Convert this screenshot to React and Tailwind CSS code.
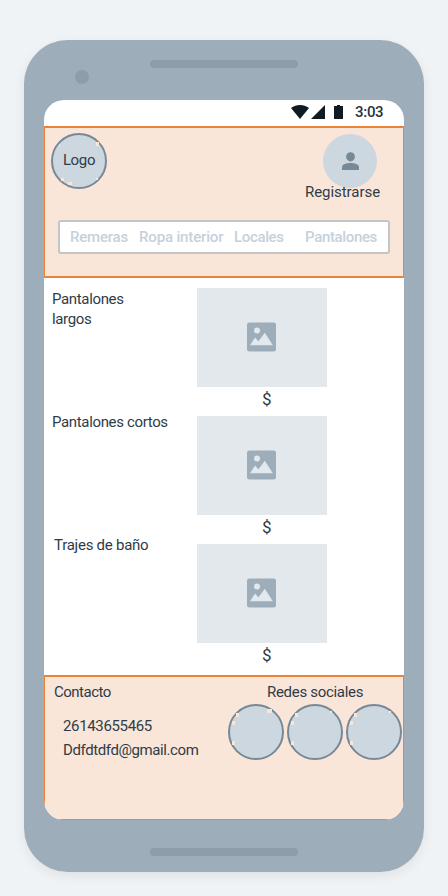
import React from "react";

function Disc({ specks, children }) {
  return (
    <div className="relative flex h-14 w-14 shrink-0 items-center justify-center rounded-full border-2 border-[#778996] bg-[#cdd7e0]">
      <svg className="absolute -left-0.5 -top-0.5" width="56" height="56" fill="#f9e6d9">
        {specks.map(([x, y, w, h]) => (
          <rect key={`${x}-${y}`} x={x} y={y} width={w} height={h} />
        ))}
      </svg>
      {children}
    </div>
  );
}

const logoSpecks = [[45, 9, 3, 4], [8, 11, 1, 2], [10, 45, 3, 3], [17, 49, 4, 3], [45, 45, 2, 2]];
const socialSpecks = [[8, 9, 3, 4], [4, 17, 3, 4], [4, 37, 3, 4]];

function Picture() {
  return (
    <div className="flex h-32 flex-col">
      <div className="flex h-[98.5px] w-[130px] items-center justify-center bg-[#e2e8ec]">
        <svg width="30" height="30" viewBox="0 0 30 30" className="-translate-x-[0.5px]">
          <rect x="0.5" y="0.5" width="29" height="29" rx="2.5" fill="#9dadb9" />
          <circle cx="10.5" cy="8.5" r="3" fill="#e2e8ec" />
          <path d="M3.5 23.2 8.5 15.5 12 19.3 18.3 10.8 26.4 23.2Z" fill="#e2e8ec" />
        </svg>
      </div>
      <span className="ml-[65px] mt-0.5 text-[17px] leading-5">$</span>
    </div>
  );
}

export default function App() {
  return (
    <div className="flex h-[896px] w-[448px] flex-col overflow-hidden whitespace-nowrap bg-[#eff3f6] px-6 pt-10 font-['Roboto',sans-serif] text-[15px] leading-5 tracking-[-0.35px] text-[#2f3c48]">
      <div className="flex h-[832px] w-[400px] flex-col items-center rounded-[44px] bg-[#9dadb9] shadow-[0_4px_12px_rgba(0,0,0,0.07)]">
        <div className="flex h-[60px] w-full shrink-0 pl-[51px]">
          <div className="mt-[30px] h-3.5 w-3.5 rounded-full bg-[#8e9dac]" />
          <div className="ml-[61px] mt-5 h-2 w-[148px] rounded-full bg-[#8e9dac]" />
        </div>

        <div className="flex h-[720px] w-[360px] shrink-0 flex-col overflow-hidden rounded-[20px] bg-white">
          <div className="flex h-[26px] shrink-0 pl-[247px] pt-[5px] text-[#101b24]">
            <svg width="18" height="14" fill="currentColor">
              <path d="M0 3C5-1 13-1 18 3L9 14Z" />
            </svg>
            <svg className="ml-0.5" width="14" height="14" fill="currentColor">
              <path d="M0 14H14V0Z" />
            </svg>
            <svg className="ml-[9px]" width="9" height="14" fill="currentColor">
              <path d="M0 1H3V0H6V1H9V14H0Z" />
            </svg>
            <span className="-mt-[3px] ml-3 font-medium tracking-[-0.3px] text-[#29333e]">3:03</span>
          </div>

          <header className="flex h-[152px] shrink-0 flex-col border-x border-y-2 border-[#ea8438] bg-[#f9e6d9]">
            <div className="flex h-[92px] pl-1.5 pt-[5px]">
              <Disc specks={logoSpecks}>
                <span className="relative -top-px">Logo</span>
              </Disc>
              <div className="ml-[198px] flex flex-col pt-px">
                <div className="ml-[18px] flex h-[54px] w-[54px] shrink-0 items-center justify-center rounded-full bg-[#cdd7e0]">
                  <svg width="17" height="18" fill="#778996">
                    <ellipse cx="8.5" cy="4.8" rx="4.4" ry="4.6" />
                    <path d="M0 18V15.2C0 12 4.5 11 8.5 11S17 12 17 15.2V18Z" />
                  </svg>
                </div>
                <span className="relative -mt-1.5 tracking-[-0.05px]">Registrarse</span>
              </div>
            </div>
            <nav className="ml-[13px] flex h-[34px] w-[332px] rounded-[3px] border-2 border-[#c3c5c7] bg-white pt-[5px] font-medium text-[#c5d1dc]">
              <span className="ml-2.5 w-[69px] tracking-[-0.2px]">Remeras</span>
              <span className="w-[95px] tracking-[-0.15px]">Ropa interior</span>
              <span className="w-[71px]">Locales</span>
              <span>Pantalones</span>
            </nav>
          </header>

          <main className="flex h-[397px] shrink-0 pl-2">
            <div className="w-[145px] pt-[11px]">
              <p className="h-[123px]">Pantalones<br />largos</p>
              <p className="h-[123px]">Pantalones cortos</p>
              <p className="h-[123px] pl-0.5 tracking-[-0.25px]">Trajes de baño</p>
            </div>
            <div className="pt-2.5">
              <Picture />
              <Picture />
              <Picture />
            </div>
          </main>

          <footer className="flex h-[145px] shrink-0 border border-t-2 border-[#ea8438] bg-[#f9e6d9] pt-[5px]">
            <div className="w-[183px] pl-[9px]">
              <p className="tracking-[-0.5px]">Contacto</p>
              <p className="ml-[9px] mt-3.5">26143655465</p>
              <p className="ml-[9px] mt-1 tracking-[-0.4px]">Ddfdtdfd@gmail.com</p>
            </div>
            <div>
              <p className="ml-[39px] tracking-[-0.3px]">Redes sociales</p>
              <div className="mt-0.5 flex gap-[3px]">
                <Disc specks={[[39, 5, 5, 4], ...socialSpecks]} />
                <Disc specks={[[43, 7, 2, 2], ...socialSpecks]} />
                <Disc specks={[[43, 7, 2, 2], ...socialSpecks]} />
              </div>
            </div>
          </footer>
        </div>

        <div className="mt-7 h-2 w-[148px] rounded-full bg-[#8e9dac]" />
      </div>
    </div>
  );
}
